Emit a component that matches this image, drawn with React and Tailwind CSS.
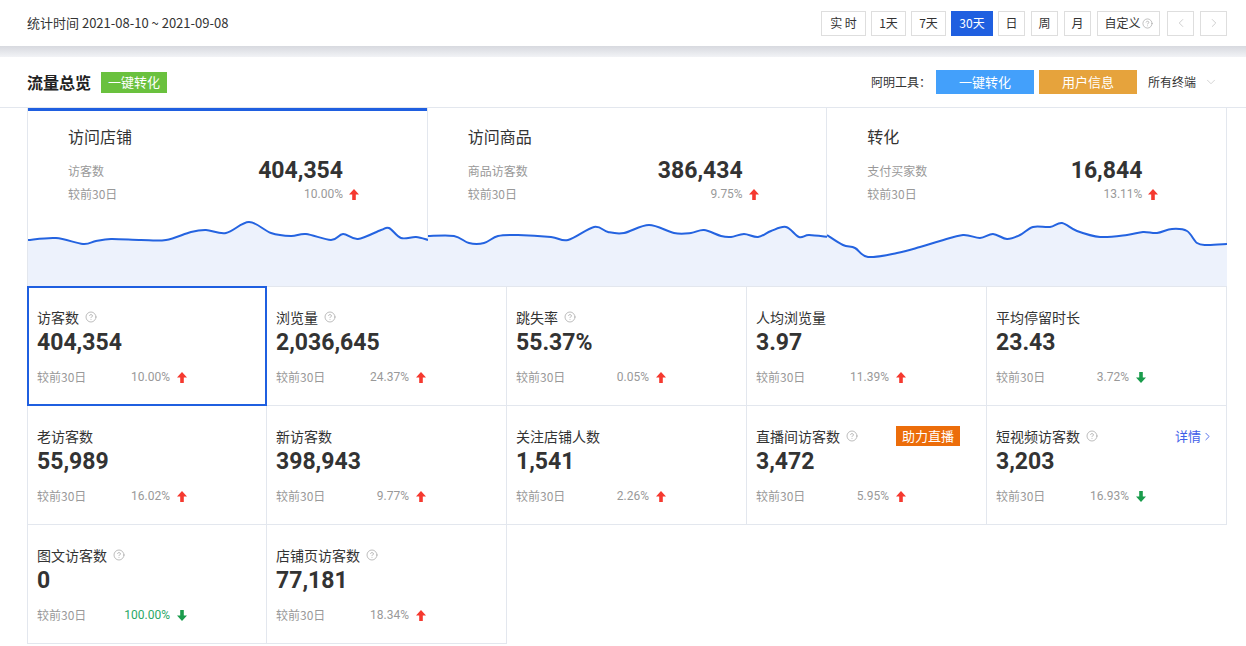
import React from 'react';
import { ChevronLeft, ChevronRight, ChevronDown, CircleHelp } from 'lucide-react';

const font = { fontFamily: '"Noto Sans CJK SC", "Noto Sans", sans-serif' };
const num = { fontFamily: 'Roboto, "Noto Sans", sans-serif' };

// smooth a list of points into a path (catmull-rom -> bezier)
const smooth = (pts) => {
  let d = `M${pts[0][0]},${pts[0][1]}`;
  for (let i = 0; i < pts.length - 1; i++) {
    const p0 = pts[i - 1] || pts[i];
    const p1 = pts[i];
    const p2 = pts[i + 1];
    const p3 = pts[i + 2] || p2;
    const c1x = p1[0] + (p2[0] - p0[0]) / 6;
    const c1y = p1[1] + (p2[1] - p0[1]) / 6;
    const c2x = p2[0] - (p3[0] - p1[0]) / 6;
    const c2y = p2[1] - (p3[1] - p1[1]) / 6;
    d += ` C${c1x},${c1y} ${c2x},${c2y} ${p2[0]},${p2[1]}`;
  }
  return d;
};

const charts = [
  [[0, 20], [28, 18], [55, 24], [68, 21], [83, 19], [113, 20], [138, 20], [163, 12], [178, 10], [198, 13], [221, 2], [243, 13], [263, 16], [278, 14], [303, 20], [315, 14], [330, 19], [353, 10], [361, 8], [373, 18], [388, 17], [400, 20]],
  [[0, 16], [26, 16], [41, 23], [56, 23], [70, 16], [90, 15], [123, 17], [140, 20], [166, 7], [180, 12], [196, 13], [221, 5], [246, 13], [263, 13], [276, 10], [293, 16], [303, 17], [316, 14], [330, 17], [343, 11], [358, 7], [371, 17], [381, 15], [400, 17]],
  [[0, 15], [16, 25], [28, 28], [41, 37], [70, 33], [93, 27], [113, 21], [136, 15], [153, 18], [166, 14], [180, 19], [193, 15], [206, 7], [223, 7], [235, 3], [250, 11], [273, 17], [300, 15], [316, 12], [330, 13], [345, 9], [360, 11], [370, 23], [380, 25], [400, 24]],
];

const Arrow = ({ up }) => (
  <svg width="10" height="11" viewBox="0 0 10 11" className="shrink-0">
    {up ? (
      <polygon points="5,0 10,5.5 6.8,5.5 6.8,11 3.2,11 3.2,5.5 0,5.5" fill="#f5392f" />
    ) : (
      <polygon points="5,11 10,5.5 6.8,5.5 6.8,0 3.2,0 3.2,5.5 0,5.5" fill="#1a9c4c" />
    )}
  </svg>
);

const Help = ({ size = 12 }) => <CircleHelp size={size} strokeWidth={1.4} className="text-[#a0a0a0]" />;

const TopCard = ({ title, label, value, pct, active, pts }) => {
  const line = smooth(pts);
  return (
    <div className="border-r border-[#e3e7ee] flex flex-col">
      <div className={`h-[3px] ${active ? 'bg-[#1f5fe0]' : 'bg-transparent'}`} />
      <div className="pl-[40px] pt-[13px]">
        <div className="text-[16px] leading-[24px] text-[#333]">{title}</div>
        <div className="mt-[9px] flex w-[275px] items-center justify-between">
          <span className="text-[12px] text-[#999]">{label}</span>
          <span style={num} className="text-[23px] leading-[28px] font-bold text-[#333]">{value}</span>
        </div>
        <div className="flex items-center">
          <div className="flex w-[275px] items-center justify-between text-[12px] leading-[18px] text-[#999]">
            <span>较前30日</span>
            <span style={num}>{pct}</span>
          </div>
          <span className="ml-[6px]"><Arrow up /></span>
        </div>
      </div>
      <svg width="400" height="66" viewBox="0 0 400 66" className="mt-[17px] block">
        <path d={`${line} L400,66 L0,66 Z`} fill="#edf2fc" />
        <path d={line} fill="none" stroke="#2463e0" strokeWidth="2" strokeLinejoin="round" />
      </svg>
    </div>
  );
};

const metrics = [
  { label: '访客数', value: '404,354', pct: '10.00%', up: true, help: true, active: true },
  { label: '浏览量', value: '2,036,645', pct: '24.37%', up: true, help: true },
  { label: '跳失率', value: '55.37%', pct: '0.05%', up: true, help: true },
  { label: '人均浏览量', value: '3.97', pct: '11.39%', up: true },
  { label: '平均停留时长', value: '23.43', pct: '3.72%', up: false },
  { label: '老访客数', value: '55,989', pct: '16.02%', up: true },
  { label: '新访客数', value: '398,943', pct: '9.77%', up: true },
  { label: '关注店铺人数', value: '1,541', pct: '2.26%', up: true },
  { label: '直播间访客数', value: '3,472', pct: '5.95%', up: true, help: true, badge: true },
  { label: '短视频访客数', value: '3,203', pct: '16.93%', up: false, help: true, more: true },
  { label: '图文访客数', value: '0', pct: '100.00%', up: false, help: true, green: true },
  { label: '店铺页访客数', value: '77,181', pct: '18.34%', up: true, help: true },
];

const Metric = ({ m, first }) => (
  <div className={`relative h-[119px] border-r border-b border-[#e3e7ee] pl-[9px] pr-[12px] pt-[21px] ${first ? 'border-l' : ''}`}>
    {m.active && <div className="absolute -left-px -top-px -right-px -bottom-px border-2 border-[#1f5fe0]" />}
    <div className="flex h-[18px] items-center justify-between">
      <div className="flex items-center gap-[6px] text-[14px] leading-[18px] text-[#333]">
        <span>{m.label}</span>
        {m.help && <Help />}
      </div>
      {m.badge && (
        <span className="mr-[14px] flex h-[20px] items-center bg-[#ec6d0a] px-[6px] text-[13px] text-white">助力直播</span>
      )}
      {m.more && (
        <span className="flex items-center text-[13px] text-[#3f5ee8]">
          详情<ChevronRight size={13} strokeWidth={1.6} />
        </span>
      )}
    </div>
    <div style={num} className="mt-[2px] text-[23px] leading-[30px] font-bold text-[#333]">{m.value}</div>
    <div className="mt-[10px] flex items-center">
      <div className="flex w-[133px] items-center justify-between text-[12px] leading-[18px] text-[#999]">
        <span>较前30日</span>
        <span style={num} className={m.green ? 'text-[#2aa866]' : ''}>{m.pct}</span>
      </div>
      <span className="ml-[7px]"><Arrow up={m.up} /></span>
    </div>
  </div>
);

const ranges = [
  { t: '实 时', w: 'w-[45px]' },
  { t: '1天', w: 'w-[35px]' },
  { t: '7天', w: 'w-[35px]' },
  { t: '30天', w: 'w-[42px]', on: true },
  { t: '日', w: 'w-[27px]' },
  { t: '周', w: 'w-[27px] ml-[1px]' },
  { t: '月', w: 'w-[27px] ml-[1px]' },
  { t: '自定义', w: 'w-[63px] ml-[1px]', help: true },
];

export default function App() {
  return (
    <div style={font} className="min-h-[646px] w-[1246px] bg-white text-[#333]">
      {/* top bar */}
      <div className="flex h-[46px] items-center justify-between pl-[27px] pr-[19px]">
        <span className="text-[13px] text-[#333]">统计时间 2021-08-10 ~ 2021-09-08</span>
        <div className="flex items-center gap-[5px] text-[12px]">
          {ranges.map((r) => (
            <span
              key={r.t}
              className={`flex h-[25px] items-center justify-center gap-[1px] border ${r.w} ${
                r.on ? 'border-[#1f5fe0] bg-[#1f5fe0] text-white' : 'border-[#dedede] text-[#333]'
              }`}
            >
              {r.t}
              {r.help && <Help size={11} />}
            </span>
          ))}
          <span className="ml-[2px] flex h-[25px] w-[27px] items-center justify-center border border-[#dedede] text-[#c8c8c8]">
            <ChevronLeft size={14} strokeWidth={1.5} />
          </span>
          <span className="ml-[1px] flex h-[25px] w-[27px] items-center justify-center border border-[#dedede] text-[#c8c8c8]">
            <ChevronRight size={14} strokeWidth={1.5} />
          </span>
        </div>
      </div>
      <div className="h-[11px] bg-gradient-to-b from-[#d7d9df] to-[#f2f3f6]" />

      {/* header */}
      <div className="flex h-[51px] items-center justify-between border-b border-[#e3e7ee] pl-[27px] pr-[28px]">
        <div className="flex items-center gap-[10px]">
          <span className="text-[16px] font-bold text-[#222]">流量总览</span>
          <span className="flex h-[21px] w-[66px] items-center justify-center bg-[#6ac13e] text-[13px] text-white">一键转化</span>
        </div>
        <div className="flex items-center text-[12px]">
          <span className="mr-[5px] text-[#333]">阿明工具：</span>
          <span className="flex h-[24px] w-[98px] items-center justify-center bg-[#43a0fb] text-[13px] text-white">一键转化</span>
          <span className="ml-[5px] flex h-[24px] w-[98px] items-center justify-center bg-[#e6a33c] text-[13px] text-white">用户信息</span>
          <span className="ml-[11px] text-[#333]">所有终端</span>
          <ChevronDown size={14} strokeWidth={1.3} className="ml-[8px] text-[#c8c8c8]" />
        </div>
      </div>

      {/* overview cards */}
      <div className="ml-[27px] w-[1200px]">
        <div className="grid grid-cols-3 border-l border-b border-[#e3e7ee]">
          <TopCard title="访问店铺" label="访客数" value="404,354" pct="10.00%" active pts={charts[0]} />
          <TopCard title="访问商品" label="商品访客数" value="386,434" pct="9.75%" pts={charts[1]} />
          <TopCard title="转化" label="支付买家数" value="16,844" pct="13.11%" pts={charts[2]} />
        </div>

        <div className="grid grid-cols-5">
          {metrics.map((m, i) => (
            <Metric key={m.label} m={m} first={i % 5 === 0} />
          ))}
        </div>
      </div>
    </div>
  );
}
